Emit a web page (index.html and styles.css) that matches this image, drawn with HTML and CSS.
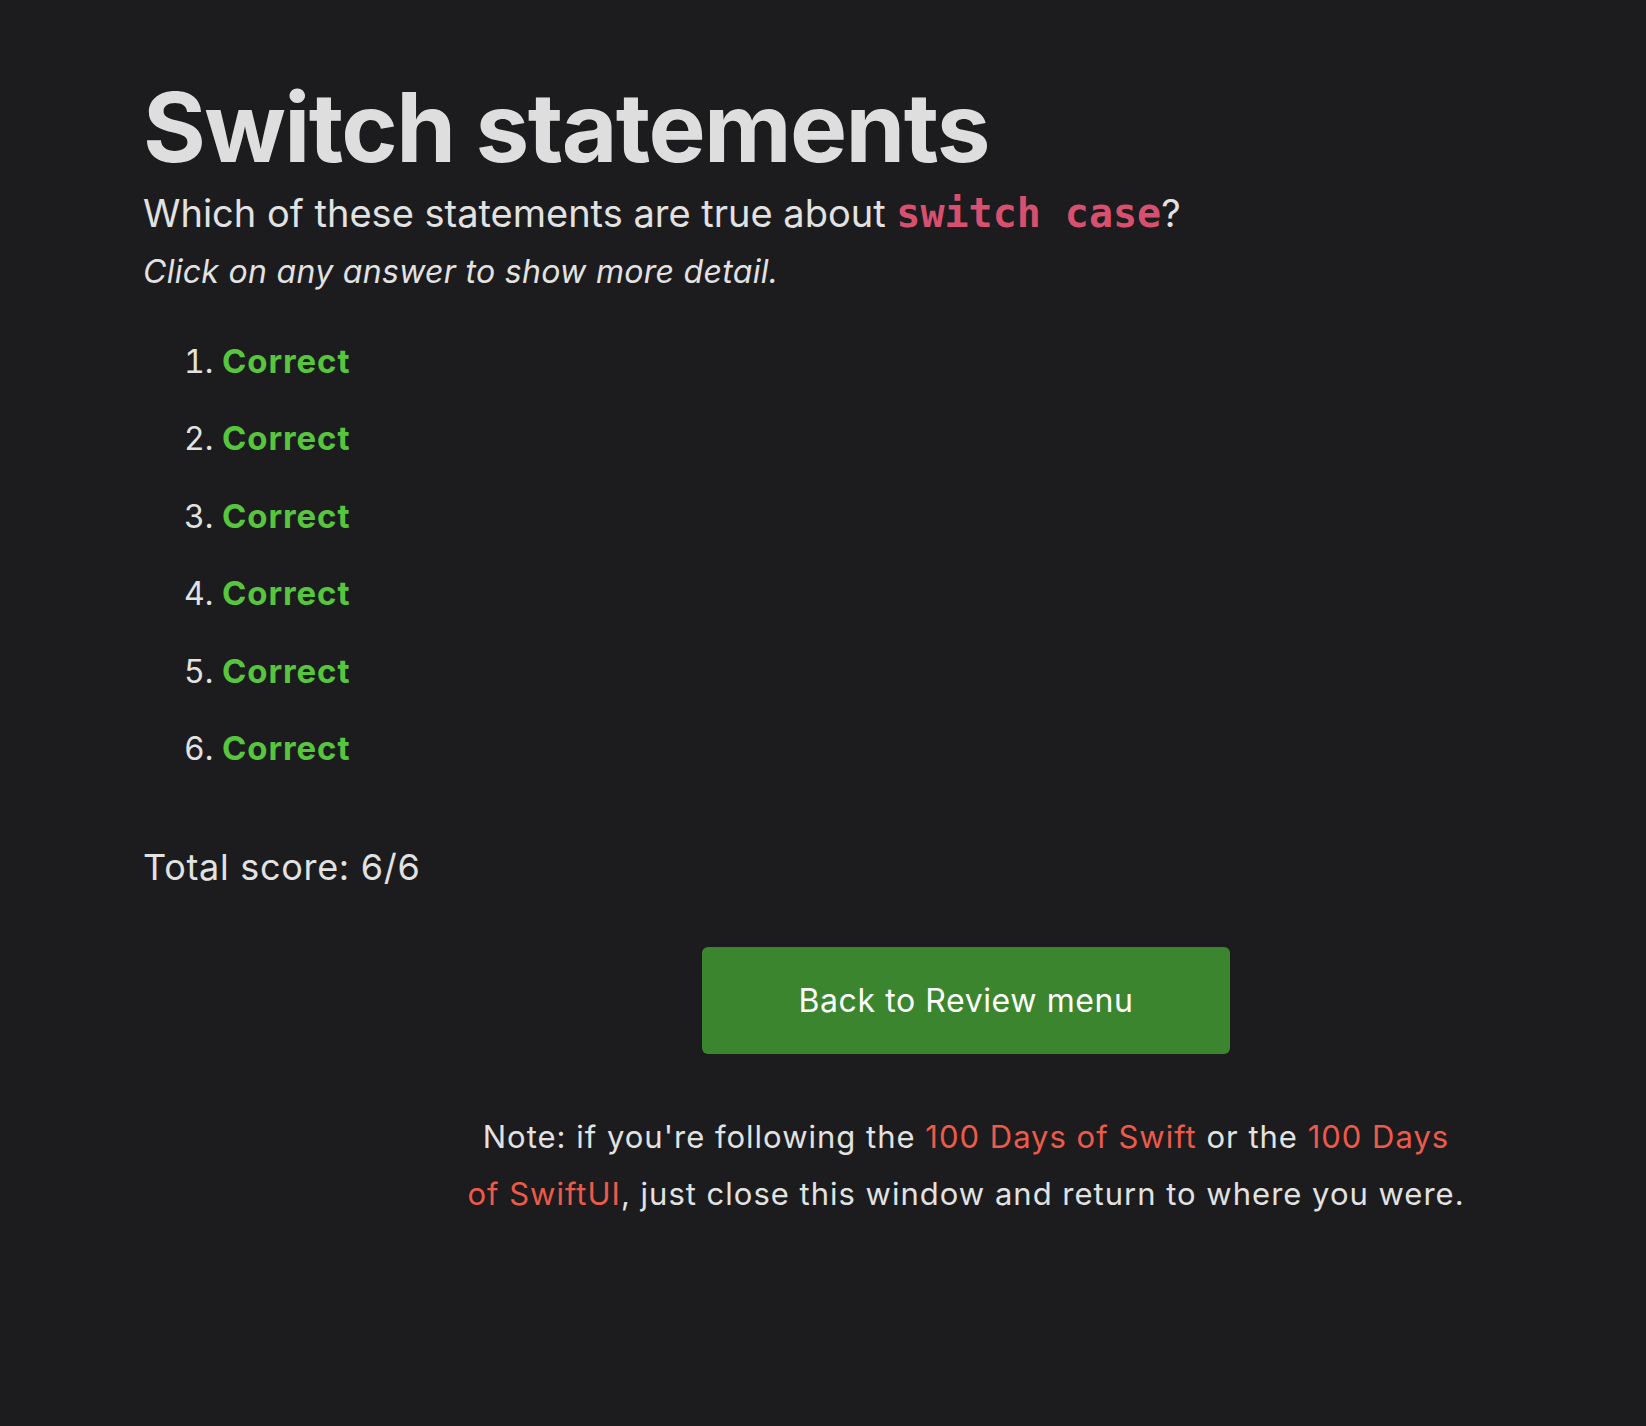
FILE: index.html
```html
<!DOCTYPE html>
<html lang="en">
<head>
<meta charset="utf-8">
<title>Switch statements</title>
<link rel="stylesheet" href="styles.css">
</head>
<body>
<main class="page">
  <h1 class="title">Switch statements</h1>
  <p class="question">Which of these statements are true about <code class="code">switch case</code>?</p>
  <p class="hint">Click on any answer to show more detail.</p>
  <ol class="answers">
    <li class="answer"><span class="correct">Correct</span></li>
    <li class="answer"><span class="correct">Correct</span></li>
    <li class="answer"><span class="correct">Correct</span></li>
    <li class="answer"><span class="correct">Correct</span></li>
    <li class="answer"><span class="correct">Correct</span></li>
    <li class="answer"><span class="correct">Correct</span></li>
  </ol>
  <p class="score">Total score: 6/6</p>
  <section class="footer">
    <a class="button" href="#">Back to Review menu</a>
    <p class="note">Note: if you're following the <a class="link" href="#">100 Days of Swift</a> or the <a class="link" href="#">100 Days of SwiftUI</a>, just close this window and return to where you were.</p>
  </section>
</main>
</body>
</html>
```

FILE: styles.css
```css
html, body {
  margin: 0;
  padding: 0;
  background: #1c1c1e;
}
body {
  font-family: Inter, "Noto Sans", sans-serif;
  color: #e2e2e2;
  min-height: 1426px;
}
.page {
  padding: 75px 0 0 143px;
}
.title {
  margin: 0;
  font-size: 96px;
  line-height: 105.6px;
  font-weight: 700;
  color: #dedede;
  letter-spacing: -1.6px;
}
.question {
  margin: 4px 0 0;
  font-size: 38px;
  line-height: 57px;
}
.code {
  font-family: "DejaVu Sans Mono", "Liberation Mono", monospace;
  font-weight: 700;
  font-size: 40px;
  line-height: 1;
  color: #d8506f;
}
.hint {
  margin: 6px 0 0;
  font-size: 32px;
  line-height: 48px;
  font-style: italic;
  letter-spacing: 0.3px;
}
.answers {
  margin: 42px 0 0;
  padding: 0 0 0 79px;
  font-size: 32px;
  line-height: 48px;
}
.answer {
  margin: 0 0 29.5px;
  padding-left: 0;
}
.answer:last-child {
  margin-bottom: 0;
}
.correct {
  color: #57c53d;
  font-weight: 700;
  font-size: 33px;
  line-height: 1;
  letter-spacing: 0.9px;
}
.score {
  margin: 67px 0 0;
  font-size: 36px;
  line-height: 54px;
  letter-spacing: 0.7px;
}
.footer {
  width: 1000px;
  margin: 53px 0 0 323px;
  display: flex;
  flex-direction: column;
  align-items: center;
}
.button {
  display: flex;
  align-items: center;
  justify-content: center;
  width: 528px;
  height: 107px;
  background: #3b852f;
  color: #ffffff;
  border-radius: 6px;
  font-size: 32px;
  letter-spacing: 0.6px;
  text-decoration: none;
}
.note {
  margin: 54px 0 0;
  font-size: 31px;
  line-height: 57px;
  letter-spacing: 1px;
  text-align: center;
}
.link {
  color: #ee5a4a;
  text-decoration: none;
}
```
